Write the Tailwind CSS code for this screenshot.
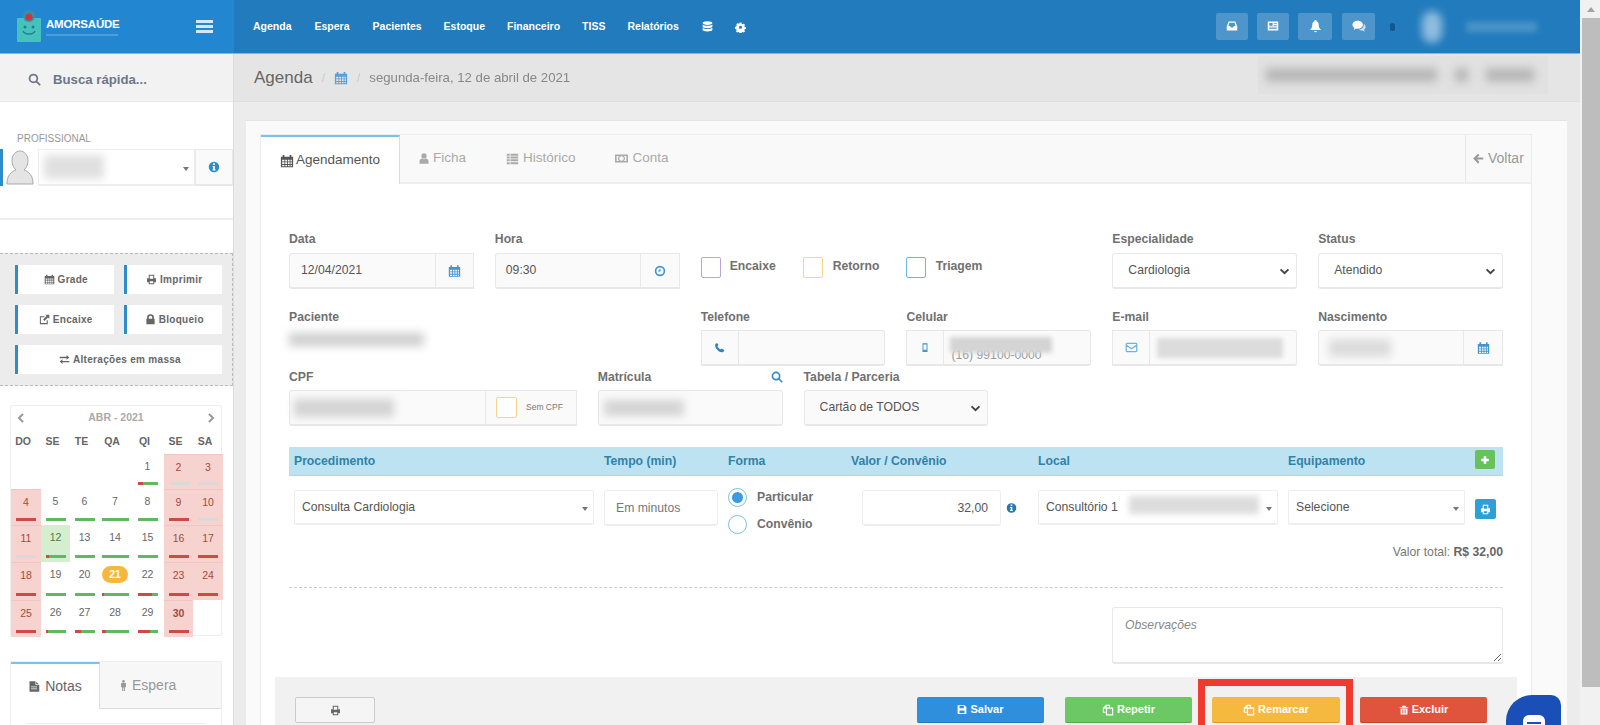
<!DOCTYPE html>
<html lang="pt-BR">
<head>
<meta charset="UTF-8">
<title>Agenda - AmorSaúde</title>
<script src="https://cdn.jsdelivr.net/npm/@tailwindcss/browser@4"></script>
</head>
<body class="h-[725px] overflow-hidden flex bg-[#ececec] font-['Liberation_Sans',Arial,sans-serif] text-[#555]">

<!-- icons -->
<svg class="hidden">
  <symbol id="i-cal" viewBox="0 0 16 16"><path fill="currentColor" d="M1 3h2V1h2v2h6V1h2v2h2v12H1zM2.500 6.500v2h2.500v-2zm3.500 0v2h2v-2zm3 0v2h2v-2zm3 0v2h1.500v-2zM2.500 9.500v2h2.500v-2zm3.500 0v2h2v-2zm3 0v2h2v-2zm3 0v2h1.500v-2zM2.500 12.500v1.500h2.500v-1.500zm3.500 0v1.500h2v-1.500zm3 0v1.500h2v-1.500zm3 0v1.500h1.500v-1.500z" fill-rule="evenodd"/></symbol>
  <symbol id="i-print" viewBox="0 0 16 16"><path fill="currentColor" fill-rule="evenodd" d="M4 1h8v5h2.500v6H12v3H4v-3H1.500V6H4zm1.500 1.500V7h5V2.500zm0 8V13.500h5v-3z"/></symbol>
  <symbol id="i-ext" viewBox="0 0 16 16"><path fill="none" stroke="currentColor" stroke-width="1.500" d="M12 9v5H2V4h6"/><path fill="currentColor" d="M9 1h6v6l-2-2-5 5-2-2 5-5z"/></symbol>
  <symbol id="i-lock" viewBox="0 0 16 16"><path fill="currentColor" fill-rule="evenodd" d="M3 7V5a5 4.500 0 0 1 10 0v2h1v8H2V7zm2.500 0h5V5a2.500 2.500 0 0 0-5 0z"/></symbol>
  <symbol id="i-swap" viewBox="0 0 16 16"><path fill="currentColor" d="M1 4h10V1.500L15 5l-4 3.500V6H1zM15 10H5V7.500L1 11l4 3.500V12h10z"/></symbol>
  <symbol id="i-clock" viewBox="0 0 16 16"><path fill="currentColor" fill-rule="evenodd" d="M8 1a7 7 0 1 1 0 14A7 7 0 0 1 8 1zm0 2.200a4.800 4.800 0 1 0 0 9.600 4.800 4.800 0 0 0 0-9.600zM7.200 5h1.500v3.800H5.500V7.400h1.700z"/></symbol>
  <symbol id="i-phone" viewBox="0 0 16 16"><path fill="currentColor" d="M4.500 1.500 2 3c-1 3 .5 6 3 8.500s5.500 4 8.500 3l1.500-2.500-3.500-2.500-2 1.500C8 10 6 8 5 6l1.500-1.500z"/></symbol>
  <symbol id="i-mobile" viewBox="0 0 16 16"><path fill="currentColor" fill-rule="evenodd" d="M4 1h8v14H4zm1.500 2v8.500h5V3z"/></symbol>
  <symbol id="i-mail" viewBox="0 0 16 16"><path fill="none" stroke="currentColor" stroke-width="1.500" d="M2.500 3h11a1 1 0 0 1 1 1v8a1 1 0 0 1-1 1h-11a1 1 0 0 1-1-1V4a1 1 0 0 1 1-1zM1.500 5 8 9.500 14.500 5"/></symbol>
  <symbol id="i-search" viewBox="0 0 16 16"><path fill="none" stroke="currentColor" stroke-width="2.200" d="M11.500 6.700a4.800 4.800 0 1 1-9.600 0 4.800 4.800 0 0 1 9.600 0zM10.300 10.300 15 15"/></symbol>
  <symbol id="i-info" viewBox="0 0 16 16"><path fill="currentColor" fill-rule="evenodd" d="M8 1a7 7 0 1 1 0 14A7 7 0 0 1 8 1zM6.800 3v2.200h2.400V3zM6 6.500v1.500h.8v3H6v1.500h4V11h-.8V6.500z"/></symbol>
  <symbol id="i-user" viewBox="0 0 16 16"><path fill="currentColor" d="M8 1a3.500 3.500 0 1 1 0 7 3.500 3.500 0 0 1 0-7zM2 15v-3c0-2.500 2-4 3.500-4 1.500 1.200 3.500 1.200 5 0 1.500 0 3.500 1.500 3.500 4v3z"/></symbol>
  <symbol id="i-list" viewBox="0 0 16 16"><path fill="currentColor" d="M1 2h3.500v2.500H1zm4.500 0H15v2.500H5.500zM1 5.500h3.500V8H1zm4.500 0H15V8H5.500zM1 9h3.500v2.500H1zm4.500 0H15v2.500H5.500zM1 12.500h3.500V15H1zm4.500 0H15V15H5.500z"/></symbol>
  <symbol id="i-money" viewBox="0 0 16 16"><path fill="currentColor" fill-rule="evenodd" d="M0 3h16v10H0zm2 2v6h3a4 4 0 0 1 0-6zm9 0a4 4 0 0 1 0 6h3V5zM8 5.200a2.800 2.800 0 1 0 0 5.600 2.800 2.800 0 0 0 0-5.600z"/></symbol>
  <symbol id="i-back" viewBox="0 0 16 16"><path fill="currentColor" d="M8 1.500 10 3.500 6.800 6.700H15v2.600H6.800L10 12.500l-2 2L1.500 8z"/></symbol>
  <symbol id="i-plus" viewBox="0 0 16 16"><path fill="currentColor" d="M6 2h4v4h4v4h-4v4H6v-4H2V6h4z"/></symbol>
  <symbol id="i-save" viewBox="0 0 16 16"><path fill="currentColor" fill-rule="evenodd" d="M1 1h11l3 3v11H1zm3 1.500V6h7V2.500zm0 7V13.500h8v-4z"/></symbol>
  <symbol id="i-clone" viewBox="0 0 16 16"><path fill="none" stroke="currentColor" stroke-width="1.500" d="M6 5.500h8.200v9H6zM10 5.500V1.800H5.500L1.800 5.500V11H6M5.500 1.800v3.700H1.800"/></symbol>
  <symbol id="i-trash" viewBox="0 0 16 16"><path fill="currentColor" fill-rule="evenodd" d="M5.500 1h5l1 2H15v1.500H1V3h3.500zM2.500 5.500h11V15h-11zM5 7v6.500h1V7zm2.500 0v6.500h1V7zM10 7v6.500h1V7z"/></symbol>
  <symbol id="i-inbox" viewBox="0 0 16 16"><path fill="currentColor" fill-rule="evenodd" d="M3.500 2h9L15 8.500V14H1V8.500zm1 1.800L3.200 8H5.500l1 2h3l1-2h2.300l-1.300-4.200z"/></symbol>
  <symbol id="i-news" viewBox="0 0 16 16"><path fill="currentColor" fill-rule="evenodd" d="M1 2h14v12H1zm2 2v3.500h4.500V4zm6 0v1h4V4zm0 2.500v1h4v-1zM3 9v1h10V9zm0 2v1h10v-1z"/></symbol>
  <symbol id="i-bell" viewBox="0 0 16 16"><path fill="currentColor" d="M8 0.500a1.300 1.300 0 0 1 1.300 1.700C11.500 3 12 5 12 7c0 2.500 1 4 2.500 5.200V13h-13v-.8C3 11 4 9.500 4 7c0-2 .5-4 2.700-4.800A1.300 1.300 0 0 1 8 .5zM6.300 14h3.400a1.700 1.700 0 0 1-3.400 0z"/></symbol>
  <symbol id="i-chat" viewBox="0 0 16 16"><path fill="currentColor" d="M6.500 2C10 2 12.500 4 12.500 6.500S10 11 6.500 11c-.7 0-1.300 0-2-.2L2 12.500l.7-2.500C1.500 9 .5 8 .5 6.500.5 4 3 2 6.500 2z"/><path fill="currentColor" opacity=".7" d="M13.500 5.500c1.300 1 2 2.200 2 3.500s-.7 2.500-1.700 3.200l.7 2.300-2.700-1.500c-1.500.2-3-.2-4-1 3.500 0 6-2.500 5.700-6.500z"/></symbol>
  <symbol id="i-db" viewBox="0 0 16 16"><path fill="currentColor" d="M8 1c3.500 0 6 .9 6 2.200S11.500 5.500 8 5.500 2 4.500 2 3.200 4.500 1 8 1zM2 5c1 1 3.500 1.500 6 1.500S13 6 14 5v2.500C14 8.700 11.500 9.500 8 9.500s-6-.8-6-2zm0 4c1 1 3.500 1.500 6 1.500s5-.5 6-1.500v2.500c0 1.300-2.500 2-6 2s-6-.7-6-2zM8 11z"/></symbol>
  <symbol id="i-cog" viewBox="0 0 16 16"><path fill="currentColor" fill-rule="evenodd" d="M6.500 1h3l.4 2 1.700.7 1.700-1.100 2 2.100-1.100 1.700.7 1.700 2 .4v2.900l-2 .4-.7 1.700 1.100 1.700-2 2-1.700-1.100-1.700.7-.4 2h-3l-.4-2-1.700-.7-1.700 1.100-2-2 1.100-1.700-.7-1.700-2-.4V7.600l2-.4.7-1.700L1.400 3.800l2-2.100 1.700 1.100 1.700-.7zM8 6a2.500 2.500 0 1 0 0 5 2.500 2.500 0 0 0 0-5z" transform="translate(.8 .7) scale(.9)"/></symbol>
  <symbol id="i-file" viewBox="0 0 16 16"><path fill="currentColor" fill-rule="evenodd" d="M2 1h8v5h5v9H2zM11 1.500 14.500 5H11zM4 8v1h8V8zm0 2.500v1h8v-1z"/></symbol>
  <symbol id="i-male" viewBox="0 0 16 16"><path fill="currentColor" d="M8 0a2 2 0 1 1 0 4 2 2 0 0 1 0-4zM4.500 4.500h7v6H10V16H8.500v-5h-1v5H6v-5.500H4.500z"/></symbol>
  <symbol id="i-down" viewBox="0 0 12 8"><path fill="none" stroke="currentColor" stroke-width="2.200" d="M1.500 1.500 6 6l4.500-4.500"/></symbol>
</svg>

<div class="w-[1580px] shrink-0 flex flex-col relative blur-[0.35px]">

  <!-- top bar -->
  <header class="h-[54px] shrink-0 flex bg-[#217bbd] border-b border-[#7db8e4] text-white">
    <div class="w-[234px] shrink-0 flex items-center bg-[#2286d0] pl-[17px] pr-[21px]">
      <svg class="w-[24px] h-[32px] mt-[-2px]" viewBox="0 0 24 32">
        <rect x="0" y="8" width="24" height="24" rx="1" fill="#45c2bd"/>
        <circle cx="12" cy="6" r="6" fill="#3a8fa8"/>
        <circle cx="12" cy="7" r="3.500" fill="#c8383f"/>
        <circle cx="8" cy="17" r="1.500" fill="#1f7f85"/><circle cx="16" cy="17" r="1.500" fill="#1f7f85"/>
        <path d="M6 21c2 4 10 4 12 0" fill="none" stroke="#1f7f85" stroke-width="1.500"/>
      </svg>
      <div class="ml-[5px] flex flex-col">
        <span class="text-[11.5px] leading-[13px] font-bold tracking-[-0.2px]">AMORSAÚDE</span>
        <span class="h-[2px] w-[72px] mt-[3px] bg-white/20 blur-[0.5px]"></span>
      </div>
      <div class="ml-auto w-[17px] flex flex-col gap-[2px]">
        <span class="h-[3px] bg-white/80"></span><span class="h-[3px] bg-white/80"></span><span class="h-[3px] bg-white/80"></span>
      </div>
    </div>
    <nav class="flex items-center pl-[19px] text-[10.5px] font-bold">
      <a class="mr-[23px]">Agenda</a>
      <a class="mr-[23px]">Espera</a>
      <a class="mr-[22px]">Pacientes</a>
      <a class="mr-[22px]">Estoque</a>
      <a class="mr-[22px]">Financeiro</a>
      <a class="mr-[22px]">TISS</a>
      <a class="mr-[22px]">Relatórios</a>
      <svg class="w-[13px] h-[14px] mr-[21px]"><use href="#i-db"/></svg>
      <svg class="w-[11px] h-[12px]"><use href="#i-cog"/></svg>
    </nav>
    <div class="ml-auto flex items-center">
      <button class="w-[32px] h-[27px] mr-[9px] mt-[-1px] flex items-center justify-center rounded-[2px] bg-white/20"><svg class="w-[12px] h-[12px]"><use href="#i-inbox"/></svg></button>
      <button class="w-[32px] h-[27px] mr-[9px] mt-[-1px] flex items-center justify-center rounded-[2px] bg-white/20"><svg class="w-[12px] h-[12px]"><use href="#i-news"/></svg></button>
      <button class="w-[34px] h-[27px] mr-[10px] mt-[-1px] flex items-center justify-center rounded-[2px] bg-white/20"><svg class="w-[13px] h-[14px]"><use href="#i-bell"/></svg></button>
      <button class="w-[33px] h-[27px] mr-[15px] mt-[-1px] flex items-center justify-center rounded-[2px] bg-white/20"><svg class="w-[14px] h-[14px]"><use href="#i-chat"/></svg></button>
      <span class="w-[5px] h-[8px] rounded-full bg-[#14558c] mr-[27px]"></span>
      <span class="w-[20px] h-[32px] rounded-full bg-white/50 blur-[4px] mr-[24px]"></span>
      <span class="w-[71px] h-[10px] bg-white/20 blur-[3px] mr-[43px]"></span>
    </div>
  </header>

  <div class="flex flex-1 min-h-0">

    <!-- sidebar -->
    <aside class="w-[234px] shrink-0 bg-white border-r border-[#dcdcdc] overflow-hidden">
      <div class="h-[48px] flex items-center pl-[28px] pt-[4px] bg-[#f2f2f2] text-[#6d7789] font-bold text-[13.2px] border-b border-[#e8e8e8]">
        <svg class="w-[13px] h-[13px] mr-[12px]"><use href="#i-search"/></svg>Busca rápida...
      </div>
      <p class="pt-[31px] pl-[17px] h-[43px] text-[10px] leading-[12px] text-[#999]">PROFISSIONAL</p>
      <div class="mt-[4px] h-[37px] flex border-l-[3px] border-[#2f8ccb]">
        <svg class="w-[35px] h-[37px] shrink-0" viewBox="0 0 35 37">
          <path d="M4 35c0-9 4-12 9-14-3-3-4-6-4-10 0-5 4-9 8-9s8 4 8 9c0 4-1 7-4 10 5 2 9 5 9 14z" fill="#e4e4e4" stroke="#a9a9a9"/>
        </svg>
        <div class="flex-1 flex items-center border border-[#eee] border-b-2 bg-white relative">
          <span class="ml-[5px] w-[60px] h-[24px] bg-[#e0e0e0] blur-[4px]"></span>
          <span class="absolute right-[5px] top-[17px] border-x-[3px] border-t-[4px] border-x-transparent border-t-[#777]"></span>
        </div>
        <div class="w-[38px] flex items-center justify-center bg-[#fafafa] border border-[#e8e8e8] border-b-2 text-[#2f8ccb]">
          <svg class="w-[12px] h-[12px]"><use href="#i-info"/></svg>
        </div>
      </div>
      <div class="mt-[32px] border-t-2 border-[#eee]"></div>
      <div class="mt-[33px] h-[133px] pl-[15px] pr-[10px] pt-[11px] grid grid-cols-2 gap-x-[10px] gap-y-[11px] content-start bg-[#ececec] border-y border-r border-dashed border-[#bbb] text-[10px] font-bold tracking-[0.3px] text-[#666]">
        <button class="h-[29px] flex items-center justify-center gap-[3px] bg-white border-l-[3px] border-[#2f8ccb]"><svg class="w-[11px] h-[11px]"><use href="#i-cal"/></svg>Grade</button>
        <button class="h-[29px] flex items-center justify-center gap-[3px] bg-white border-l-[3px] border-[#2f8ccb]"><svg class="w-[11px] h-[11px]"><use href="#i-print"/></svg>Imprimir</button>
        <button class="h-[29px] flex items-center justify-center gap-[3px] bg-white border-l-[3px] border-[#2f8ccb]"><svg class="w-[11px] h-[11px]"><use href="#i-ext"/></svg>Encaixe</button>
        <button class="h-[29px] flex items-center justify-center gap-[3px] bg-white border-l-[3px] border-[#2f8ccb]"><svg class="w-[11px] h-[11px]"><use href="#i-lock"/></svg>Bloqueio</button>
        <button class="col-span-2 h-[29px] flex items-center justify-center gap-[3px] bg-white border-l-[3px] border-[#2f8ccb]"><svg class="w-[11px] h-[11px]"><use href="#i-swap"/></svg>Alterações em massa</button>
      </div>

      <!-- mini calendar -->
      <div class="mt-[19px] ml-[10px] w-[212px] h-[231px] border border-[#eee] rounded-[2px] text-[10.5px]">
        <div class="h-[24px] flex items-center justify-between px-[6px] text-[#aaa] font-bold">
          <svg class="w-[7px] h-[10px]" viewBox="0 0 7 10"><path d="M6 1 2 5l4 4" fill="none" stroke="#999" stroke-width="2"/></svg>
          <span>ABR - 2021</span>
          <svg class="w-[7px] h-[10px]" viewBox="0 0 7 10"><path d="m1 1 4 4-4 4" fill="none" stroke="#999" stroke-width="2"/></svg>
        </div>
        <div class="h-[24px] ml-[-3px] grid grid-cols-[30px_29px_29px_32px_33px_29px_30px] items-center text-center font-bold text-[#666]">
          <span>DO</span><span>SE</span><span>TE</span><span>QA</span><span>QI</span><span>SE</span><span>SA</span>
        </div>
        <div id="days" class="grid grid-cols-[30px_29px_29px_32px_33px_29px_30px] grid-rows-[35px_36px_37px_38px_37px]"></div>
      </div>

      <!-- notas -->
      <div class="mt-[25px] ml-[10px] w-[212px] border border-[#eee]">
        <div class="h-[47px] flex text-[14px]">
          <div class="w-[89px] flex items-center justify-center gap-[5px] bg-white border-t-2 border-r border-t-[#7cc1ea] border-r-[#ddd] text-[#666]"><svg class="w-[12px] h-[13px]"><use href="#i-file"/></svg>Notas</div>
          <div class="flex-1 flex items-center pl-[18px] gap-[3px] bg-[#f7f7f7] border-b border-[#ddd] text-[#999]"><svg class="w-[11px] h-[15px]"><use href="#i-male"/></svg>Espera</div>
        </div>
        <div class="mx-[14px] mt-[14px] h-[40px] border border-[#eee] rounded-[3px]"></div>
      </div>
    </aside>

    <!-- main -->
    <main class="flex-1 min-w-0 overflow-hidden">
      <div class="h-[48px] flex items-center pl-[20px] bg-[#e5e5e5] border-b border-[#dedede] relative">
        <span class="text-[17px] text-[#666]">Agenda</span>
        <span class="ml-[9px] text-[12px] text-[#ccc]">/</span>
        <svg class="ml-[9px] w-[14px] h-[14px] text-[#5b9fd6]"><use href="#i-cal"/></svg>
        <span class="ml-[9px] text-[12px] text-[#ccc]">/</span>
        <span class="ml-[9px] text-[13.2px] text-[#888]">segunda-feira, 12 de abril de 2021</span>
        <div class="absolute left-[1024px] top-[2px] w-[290px] h-[38px] flex items-center pl-[8px] gap-[18px] bg-[#e0e0e0]/70">
          <span class="w-[171px] h-[14px] bg-[#b8b8b8] blur-[4px]"></span>
          <span class="w-[13px] h-[14px] bg-[#b8b8b8] blur-[4px]"></span>
          <span class="w-[48px] h-[14px] bg-[#b8b8b8] blur-[4px]"></span>
        </div>
      </div>

      <div class="ml-[12px] mr-[13px] mt-[18px] pt-[13px] pl-[14px] pr-[35px] bg-[#fafafa] border-t border-[#e4e4e4]">
        <div class="border border-[#ececec] bg-white">
          <!-- tabs -->
          <div class="h-[49px] flex items-stretch bg-[#f9f9f9] border-b-2 border-[#eee] text-[13.5px] text-[#aaa]">
            <div class="w-[139px] mb-[-2px] flex items-center justify-center gap-[2px] bg-white border-t-2 border-r border-t-[#7cc1ea] border-r-[#ddd] text-[#555]">
              <svg class="w-[14px] h-[14px]"><use href="#i-cal"/></svg>Agendamento
            </div>
            <div class="ml-[18px] flex items-center gap-[3px]"><svg class="w-[12px] h-[13px]"><use href="#i-user"/></svg>Ficha</div>
            <div class="ml-[39px] flex items-center gap-[3px]"><svg class="w-[15px] h-[13px]"><use href="#i-list"/></svg>Histórico</div>
            <div class="ml-[38px] flex items-center gap-[4px]"><svg class="w-[15px] h-[13px]"><use href="#i-money"/></svg>Conta</div>
            <div class="ml-auto w-[66px] flex items-center gap-[4px] pl-[6px] border-l border-[#e8e8e8] text-[14px] text-[#999]"><svg class="w-[12px] h-[13px]"><use href="#i-back"/></svg>Voltar</div>
          </div>

          <div class="px-[28px] pt-[48px] text-[12.2px]">
            <!-- row 1 -->
            <div class="grid grid-cols-12 gap-x-[21px]">
              <div class="col-span-2">
                <label class="block h-[14px] leading-[14px] mb-[7px] font-bold text-[#707070]">Data</label>
                <div class="h-[36px] flex"><input value="12/04/2021" class="w-[147px] px-[11px] bg-[#fafafa] border border-[#e8e8e8] border-b-2 rounded-l-[3px] text-[#555]"><span class="flex-1 flex items-center justify-center bg-[#fafafa] border border-l-0 border-[#e8e8e8] border-b-2 text-[#3f95d6]"><svg class="w-[13px] h-[14px]"><use href="#i-cal"/></svg></span></div>
              </div>
              <div class="col-span-2">
                <label class="block h-[14px] leading-[14px] mb-[7px] font-bold text-[#707070]">Hora</label>
                <div class="h-[36px] flex"><input value="09:30" class="w-[146px] px-[10px] bg-[#fafafa] border border-[#e8e8e8] border-b-2 rounded-l-[3px] text-[#555]"><span class="flex-1 flex items-center justify-center bg-[#fafafa] border border-l-0 border-[#e8e8e8] border-b-2 text-[#3f95d6]"><svg class="w-[12px] h-[12px]"><use href="#i-clock"/></svg></span></div>
              </div>
              <div class="col-span-4 flex items-start pt-[25px] font-bold text-[#707070]">
                <span class="w-[20px] h-[21px] rounded-[2px] bg-white border border-[#b8a5dc]"></span><span class="ml-[9px] w-[73px] leading-[18px]">Encaixe</span>
                <span class="w-[20px] h-[21px] rounded-[2px] bg-white border border-[#f6d58a]"></span><span class="ml-[10px] w-[73px] leading-[18px]">Retorno</span>
                <span class="w-[20px] h-[21px] rounded-[2px] bg-white border border-[#6fb4e2]"></span><span class="ml-[10px] leading-[18px]">Triagem</span>
              </div>
              <div class="col-span-2">
                <label class="block h-[14px] leading-[14px] mb-[7px] font-bold text-[#707070]">Especialidade</label>
                <div class="relative">
                  <select class="appearance-none w-full h-[36px] pl-[15px] bg-white border border-[#e8e8e8] border-b-2 rounded-[3px] text-[#555]"><option>Cardiologia</option></select>
                  <svg class="absolute right-[7px] top-[15px] w-[11px] h-[7px] text-[#444]"><use href="#i-down"/></svg>
                </div>
              </div>
              <div class="col-span-2">
                <label class="block h-[14px] leading-[14px] mb-[7px] font-bold text-[#707070]">Status</label>
                <div class="relative">
                  <select class="appearance-none w-full h-[36px] pl-[15px] bg-white border border-[#e8e8e8] border-b-2 rounded-[3px] text-[#555]"><option>Atendido</option></select>
                  <svg class="absolute right-[7px] top-[15px] w-[11px] h-[7px] text-[#444]"><use href="#i-down"/></svg>
                </div>
              </div>
            </div>

            <!-- row 2 -->
            <div class="mt-[21px] grid grid-cols-12 gap-x-[21px]">
              <div class="col-span-4">
                <label class="block h-[14px] leading-[14px] mb-[6px] font-bold text-[#707070]">Paciente</label>
                <div class="h-[36px] pt-[3px]"><div class="w-[135px] h-[13px] bg-[#cdcdcd] blur-[5px]"></div></div>
              </div>
              <div class="col-span-2">
                <label class="block h-[14px] leading-[14px] mb-[6px] font-bold text-[#707070]">Telefone</label>
                <div class="h-[36px] flex"><span class="w-[38px] flex items-center justify-center bg-[#fafafa] border border-[#e8e8e8] border-b-2 text-[#2f80c4]"><svg class="w-[11px] h-[11px]"><use href="#i-phone"/></svg></span><input class="flex-1 min-w-0 bg-[#fafafa] border border-l-0 border-[#e8e8e8] border-b-2 rounded-r-[3px]"></div>
              </div>
              <div class="col-span-2">
                <label class="block h-[14px] leading-[14px] mb-[6px] font-bold text-[#707070]">Celular</label>
                <div class="h-[36px] flex"><span class="w-[38px] flex items-center justify-center bg-[#fafafa] border border-[#e8e8e8] border-b-2 text-[#3f95d6]"><svg class="w-[10px] h-[11px]"><use href="#i-mobile"/></svg></span><div class="flex-1 min-w-0 relative pl-[7px] pt-[15px] bg-[#fafafa] border border-l-0 border-[#e8e8e8] border-b-2 rounded-r-[3px] text-[#999]">(16) 99100-0000<span class="absolute left-[6px] top-[6px] w-[102px] h-[16px] bg-[#d4d4d4] blur-[2px]"></span></div></div>
              </div>
              <div class="col-span-2">
                <label class="block h-[14px] leading-[14px] mb-[6px] font-bold text-[#707070]">E-mail</label>
                <div class="h-[36px] flex"><span class="w-[38px] flex items-center justify-center bg-[#fafafa] border border-[#e8e8e8] border-b-2 text-[#68b3ea]"><svg class="w-[13px] h-[13px]"><use href="#i-mail"/></svg></span><div class="flex-1 min-w-0 flex items-center pl-[7px] bg-[#fafafa] border border-l-0 border-[#e8e8e8] border-b-2 rounded-r-[3px]"><span class="w-[126px] h-[20px] bg-[#dcdcdc] blur-[2px]"></span></div></div>
              </div>
              <div class="col-span-2">
                <label class="block h-[14px] leading-[14px] mb-[6px] font-bold text-[#707070]">Nascimento</label>
                <div class="h-[36px] flex"><div class="w-[146px] flex items-center pl-[10px] bg-[#fafafa] border border-[#e8e8e8] border-b-2 rounded-l-[3px]"><span class="w-[62px] h-[18px] bg-[#dcdcdc] blur-[4px]"></span></div><span class="flex-1 flex items-center justify-center bg-[#fafafa] border border-l-0 border-[#e8e8e8] border-b-2 text-[#3f95d6]"><svg class="w-[13px] h-[14px]"><use href="#i-cal"/></svg></span></div>
              </div>
            </div>

            <!-- row 3 -->
            <div class="mt-[4px] grid grid-cols-12 gap-x-[21px]">
              <div class="col-span-3">
                <label class="block h-[14px] leading-[14px] mb-[6px] font-bold text-[#707070]">CPF</label>
                <div class="h-[36px] flex"><div class="w-[197px] flex items-center pl-[4px] bg-[#fafafa] border border-[#e8e8e8] border-b-2 rounded-l-[3px]"><span class="w-[100px] h-[18px] bg-[#d4d4d4] blur-[4px]"></span></div><span class="flex-1 flex items-center pl-[10px] gap-[9px] bg-[#fafafa] border border-l-0 border-[#e8e8e8] border-b-2 text-[8.500px] text-[#777]"><span class="w-[21px] h-[21px] shrink-0 rounded-[2px] bg-white border border-[#f6d58a]"></span>Sem CPF</span></div>
              </div>
              <div class="col-span-2 relative">
                <label class="block h-[14px] leading-[14px] mb-[6px] font-bold text-[#707070]">Matrícula</label>
                <svg class="absolute right-0 top-[1px] w-[12px] h-[12px] text-[#2f8ccb]"><use href="#i-search"/></svg>
                <div class="h-[36px] flex items-center pl-[5px] bg-[#fafafa] border border-[#e8e8e8] border-b-2 rounded-[3px]"><span class="w-[80px] h-[16px] bg-[#d4d4d4] blur-[4px]"></span></div>
              </div>
              <div class="col-span-2">
                <label class="block h-[14px] leading-[14px] mb-[6px] font-bold text-[#707070]">Tabela / Parceria</label>
                <div class="relative">
                  <select class="appearance-none w-full h-[36px] pl-[15px] bg-[#fafafa] border border-[#e8e8e8] border-b-2 rounded-[3px] text-[#555]"><option>Cartão de TODOS</option></select>
                  <svg class="absolute right-[7px] top-[15px] w-[11px] h-[7px] text-[#444]"><use href="#i-down"/></svg>
                </div>
              </div>
            </div>

            <!-- procedures -->
            <div class="mt-[21px] h-[29px] pl-[5px] grid grid-cols-[310px_124px_134px_176px_250px_187px_28px] items-center bg-[#bde3f3] border-b border-[#a9d9ef] font-bold text-[#2f82a8]">
              <span>Procedimento</span>
              <span>Tempo (min)</span>
              <span>Forma</span>
              <span class="ml-[-11px]">Valor / Convênio</span>
              <span>Local</span>
              <span>Equipamento</span>
              <span class="w-[20px] h-[19px] mt-[-3px] flex items-center justify-center rounded-[2px] bg-[#68c25c] text-white"><svg class="w-[10px] h-[10px]"><use href="#i-plus"/></svg></span>
            </div>
            <div class="pt-[14px] pl-[5px] grid grid-cols-[310px_124px_134px_176px_250px_187px_28px] items-start">
              <div class="w-[300px] h-[35px] relative pl-[7px] pt-[7px] bg-white border border-[#eee] border-b-2 rounded-[2px]">Consulta Cardiologia<span class="absolute right-[5px] top-[16px] border-x-[3px] border-t-[4px] border-x-transparent border-t-[#777]"></span></div>
              <input placeholder="Em minutos" class="w-[114px] h-[36px] px-[11px] bg-white border border-[#eee] border-b-2 rounded-[3px] placeholder:text-[#777]">
              <div class="mt-[-2px] font-bold text-[#707070]">
                <div class="flex items-center h-[19px]"><span class="w-[19px] h-[19px] flex items-center justify-center rounded-full border border-[#7cc0e8]"><span class="w-[11px] h-[11px] rounded-full bg-[#3b9ae0]"></span></span><span class="ml-[10px]">Particular</span></div>
                <div class="flex items-center h-[19px] mt-[8px]"><span class="w-[19px] h-[19px] rounded-full border border-[#7cc0e8]"></span><span class="ml-[10px]">Convênio</span></div>
              </div>
              <div class="flex items-center">
                <input value="32,00" class="w-[139px] h-[36px] px-[12px] text-right bg-white border border-[#eee] border-b-2 rounded-[3px] text-[#555]">
                <svg class="ml-[5px] w-[11px] h-[12px] text-[#2878b5]"><use href="#i-info"/></svg>
              </div>
              <div class="w-[240px] h-[35px] relative pl-[7px] pt-[7px] bg-white border border-[#eee] border-b-2 rounded-[2px]">Consultório 1<span class="absolute left-[90px] top-[5px] w-[130px] h-[18px] bg-[#dcdcdc] blur-[3px]"></span><span class="absolute right-[5px] top-[16px] border-x-[3px] border-t-[4px] border-x-transparent border-t-[#777]"></span></div>
              <div class="w-[177px] h-[35px] relative pl-[7px] pt-[7px] bg-white border border-[#eee] border-b-2 rounded-[2px]">Selecione<span class="absolute right-[5px] top-[16px] border-x-[3px] border-t-[4px] border-x-transparent border-t-[#777]"></span></div>
              <span class="mt-[9px] w-[21px] h-[20px] flex items-center justify-center rounded-[2px] bg-[#2f9fd8] text-white"><svg class="w-[11px] h-[11px]"><use href="#i-print"/></svg></span>
            </div>

            <p class="mt-[11px] text-right text-[#777] leading-[14px]">Valor total: <b class="text-[#666]">R$ 32,00</b></p>

            <div class="mt-[28px] border-t border-dashed border-[#ccc]"></div>

            <div class="mt-[19px] flex justify-end">
              <textarea placeholder="Observações" class="block w-[391px] h-[57px] px-[12px] py-[8px] italic bg-white border border-[#e8e8e8] border-b-2 rounded-[3px] placeholder:text-[#888]"></textarea>
            </div>

            <!-- actions -->
            <div class="mt-[13px] mx-[-14px] h-[60px] pt-[20px] pl-[20px] pr-[30px] flex bg-[#f1f1f1] text-[11px] font-bold text-white">
              <button class="w-[80px] h-[26px] flex items-center justify-center bg-[#f5f5f5] border border-[#ccc] rounded-[2px] text-[#666]"><svg class="w-[11px] h-[11px]"><use href="#i-print"/></svg></button>
              <button class="ml-auto w-[127px] h-[26px] flex items-center justify-center gap-[3px] bg-[#2f8fdc] border-b border-[#2478b8] rounded-[2px]"><svg class="w-[10px] h-[11px]"><use href="#i-save"/></svg>Salvar</button>
              <button class="ml-[21px] w-[127px] h-[26px] flex items-center justify-center gap-[3px] bg-[#6cc864] border-b border-[#58a850] rounded-[2px]"><svg class="w-[12px] h-[12px]"><use href="#i-clone"/></svg>Repetir</button>
              <button class="ml-[20px] w-[128px] h-[26px] flex items-center justify-center gap-[3px] bg-[#f6b93f] border-b border-[#d99d2c] rounded-[2px]"><svg class="w-[12px] h-[12px]"><use href="#i-clone"/></svg>Remarcar</button>
              <button class="ml-[20px] w-[127px] h-[26px] flex items-center justify-center gap-[3px] bg-[#e0533d] border-b border-[#bf4430] rounded-[2px]"><svg class="w-[10px] h-[12px]"><use href="#i-trash"/></svg>Excluir</button>
            </div>
          </div>
        </div>
      </div>
    </main>
  </div>

  <!-- highlight drawn over the screenshot -->
  <div class="absolute left-[1198px] top-[679px] w-[155px] h-[60px] border-[7px] border-[#f03a30]"></div>

  <!-- chat widget -->
  <div class="absolute left-[1506px] top-[695px] w-[55px] h-[55px] rounded-[26px] rounded-tr-[10px] bg-[#1a4fb8] flex justify-center pt-[20px]">
    <span class="w-[22px] h-[20px] pt-[7px] px-[4px] rounded-[6px] bg-white"><span class="block h-[2px] bg-[#1a4fb8]"></span></span>
  </div>
</div>

<!-- scrollbar -->
<div class="flex-1 bg-[#f1f1f1] pl-[2px] flex flex-col">
  <div class="h-[18px] flex items-center justify-center"><span class="border-x-[4px] border-b-[5px] border-x-transparent border-b-[#a3a3a3]"></span></div>
  <div class="h-[669px] bg-[#bdbdbd]"></div>
</div>

<script>
// [day, kind, % of the bar in red]  kind: o = closed (red), g = selected (green), t = today pill
const days = [
  null, null, null, null, [1, '', 25], [2, 'o', -1], [3, 'o', -1],
  [4, 'o', 100], [5, '', 0], [6, '', 0], [7, '', 0], [8, '', 0], [9, 'o', 100], [10, 'o', -1],
  [11, 'o', -1], [12, 'g', 15], [13, '', 0], [14, '', 0], [15, '', 0], [16, 'o', 100], [17, 'o', 100],
  [18, 'o', 100], [19, '', 0], [20, '', 0], [21, 't', 10], [22, '', 70], [23, 'o', 100], [24, 'o', 100],
  [25, 'o', 100], [26, '', 10], [27, '', 30], [28, '', 15], [29, '', 60], [30, 'o', 100], null
];
const cellClass = {
  '': 'bg-white text-[#666]',
  o: 'bg-[#f6d3cf] text-[#a34a40] border-t border-[#f1c5c1]',
  g: 'bg-[#d5eed0] text-[#4b7d46]',
  t: 'bg-white text-[#666]'
};
const box = document.getElementById('days');
days.forEach((d, i) => {
  const cell = document.createElement('div');
  if (!d) { box.appendChild(cell); return; }
  const [n, kind, red] = d;
  cell.className = 'flex flex-col items-center justify-between pt-[5px] pb-[4px] ' + cellClass[kind];
  const num = document.createElement('span');
  num.textContent = n;
  if (kind === 't') num.className = 'w-[26px] h-[17px] mt-[-1px] rounded-full bg-[#f6b73c] text-white font-bold text-center leading-[17px]';
  if (n === 30) num.className = 'font-bold';
  const bar = document.createElement('div');
  bar.className = 'h-[3px] flex ' + (i % 7 === 3 ? 'w-[27px]' : 'w-[20px]');
  const r = document.createElement('span');
  const g = document.createElement('span');
  r.className = 'bg-[#cf4a40]';
  g.className = 'flex-1 ' + (red < 0 ? 'bg-[#d9d9d9]' : 'bg-[#62b862]');
  r.style.width = Math.max(red, 0) + '%';
  bar.append(r, g);
  cell.append(num, bar);
  box.appendChild(cell);
});
</script>
</body>
</html>
